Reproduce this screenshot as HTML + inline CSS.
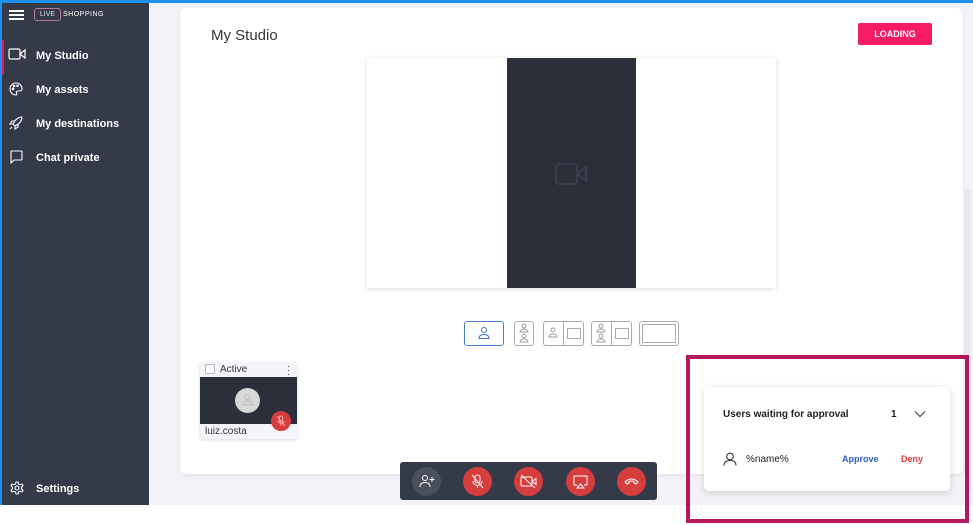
<!DOCTYPE html>
<html><head><meta charset="utf-8"><style>
*{box-sizing:border-box;margin:0;padding:0}
body{width:973px;height:525px;overflow:hidden;background:#fff;font-family:"Liberation Sans",sans-serif;position:relative}
.abs{position:absolute}
#top{left:0;top:0;width:973px;height:3px;background:#1e90f0}
#lb{left:0;top:0;width:2px;height:505px;background:#1e90f0}
#side{left:2px;top:3px;width:147px;height:502px;background:#343a48;color:#fff;font-size:11px;font-weight:bold}
#main{left:149px;top:3px;width:824px;height:502px;background:#f3f3f7}
#card{left:180px;top:8px;width:783px;height:466px;background:#fff;border-radius:6px;box-shadow:0 1px 4px rgba(0,0,0,.08)}
.nav{position:absolute;left:34px}
svg{position:absolute}
</style></head><body>
<div class="abs" id="main"></div>
<div class="abs" style="left:965px;top:190px;width:6px;height:300px;background:#e8e8ec"></div>
<div class="abs" id="card"></div>
<div class="abs" id="side">
 <div class="abs" style="left:7px;top:7px;width:15px;height:2px;background:#fff;box-shadow:0 4px 0 #fff,0 8px 0 #fff"></div>
 <div class="abs" style="left:32px;top:5px;width:27px;height:13px;border:1px solid #b07a96;border-radius:3px;font-size:7px;font-weight:normal;color:#ddd;text-align:center;line-height:11px">LIVE</div>
 <div class="abs" style="left:61px;top:8px;font-size:7px;font-weight:normal;letter-spacing:.5px">SHOPPING</div>
 <div class="abs" style="left:0;top:37px;width:2px;height:35px;background:#e8175d"></div>
 <svg style="left:6px;top:45px" width="18" height="12" viewBox="0 0 18 12" fill="none" stroke="#fff" stroke-width="1.2"><rect x="1" y="1" width="11" height="10" rx="1.5"/><path d="M12 6l5-4v8z"/></svg>
 <div class="nav" style="top:47px">My Studio</div>
 <svg style="left:7px;top:79px" width="14" height="14" viewBox="0 0 14 14" fill="none" stroke="#fff" stroke-width="1.1"><path d="M7 1a6 6 0 1 0 0 12c1 0 1-1 .5-2s0-2 1.5-2h2a2 2 0 0 0 2-2C13 3.5 10.5 1 7 1z"/><circle cx="4" cy="7" r=".8"/><circle cx="5" cy="4" r=".8"/><circle cx="8.5" cy="3.8" r=".8"/></svg>
 <div class="nav" style="top:81px">My assets</div>
 <svg style="left:7px;top:113px" width="14" height="14" viewBox="0 0 14 14" fill="none" stroke="#fff" stroke-width="1.1"><path d="M13 1C9 1 6 4 4 8l2 2c4-2 7-5 7-9zM4 8L1 8l2-3h3M6 10v3l3-2V8M3 11l-2 2"/></svg>
 <div class="nav" style="top:115px">My destinations</div>
 <svg style="left:7px;top:147px" width="14" height="14" viewBox="0 0 14 14" fill="none" stroke="#fff" stroke-width="1.1"><path d="M2 1h10a1 1 0 0 1 1 1v7a1 1 0 0 1-1 1H5l-3 3V2a1 1 0 0 1 1-1z"/></svg>
 <div class="nav" style="top:149px">Chat private</div>
 <svg style="left:8px;top:478px" width="14" height="14" viewBox="0 0 14 14" fill="none" stroke="#fff" stroke-width="1.1"><circle cx="7" cy="7" r="2"/><path d="M6 1h2l.5 2 1.5.8 2-.8 1 1.7-1.5 1.5v1.6l1.5 1.5-1 1.7-2-.8-1.5.8L8 13H6l-.5-2-1.5-.8-2 .8-1-1.7 1.5-1.5V6.2L1 4.7l1-1.7 2 .8 1.5-.8z"/></svg>
 <div class="nav" style="top:480px">Settings</div>
</div>
<div class="abs" style="left:211px;top:27px;font-size:15px;color:#333">My Studio</div>
<div class="abs" style="left:858px;top:23px;width:74px;height:22px;background:#f51c64;border-radius:2px;color:#fff;font-size:9px;font-weight:bold;text-align:center;line-height:22px">LOADING</div>
<div class="abs" style="left:367px;top:58px;width:409px;height:230px;background:#fff;box-shadow:0 1px 5px rgba(0,0,0,.15)"></div>
<div class="abs" style="left:507px;top:58px;width:129px;height:230px;background:#2b2f39"></div>
<svg style="left:555px;top:162px" width="34" height="24" viewBox="0 0 34 24" fill="none" stroke="#3e4250" stroke-width="1.6"><rect x="1" y="2" width="21" height="20" rx="3"/><path d="M22 12l9-7v14z"/></svg>
<div class="abs" style="left:464px;top:321px;width:40px;height:25px;border:1px solid #4a7bd0;border-radius:3px"></div>
<svg style="left:477px;top:326px" width="14" height="14" viewBox="0 0 14 14" fill="none" stroke="#3b6fc9" stroke-width="1"><circle cx="7" cy="4" r="2.5"/><path d="M2 12.5c0-3 2-4 5-4s5 1 5 4z"/></svg>
<div class="abs" style="left:514px;top:321px;width:20px;height:25px;border:1px solid #aaa;border-radius:3px"></div>
<div class="abs" style="left:543px;top:321px;width:41px;height:25px;border:1px solid #aaa;border-radius:3px"></div>
<div class="abs" style="left:563px;top:321px;width:1px;height:25px;background:#aaa"></div>
<div class="abs" style="left:567px;top:328px;width:14px;height:11px;border:1px solid #aaa"></div>
<div class="abs" style="left:591px;top:321px;width:41px;height:25px;border:1px solid #aaa;border-radius:3px"></div>
<div class="abs" style="left:611px;top:321px;width:1px;height:25px;background:#aaa"></div>
<div class="abs" style="left:615px;top:328px;width:14px;height:11px;border:1px solid #aaa"></div>
<div class="abs" style="left:639px;top:321px;width:40px;height:25px;border:1px solid #aaa;border-radius:3px"></div>
<div class="abs" style="left:642px;top:324px;width:34px;height:19px;border:1px solid #aaa"></div>
<svg style="left:519px;top:322px" width="10" height="24" viewBox="0 0 10 24" fill="none" stroke="#999" stroke-width=".9"><circle cx="5" cy="4" r="2"/><path d="M1 10h8c0-2-2-3-4-3s-4 1-4 3z"/><circle cx="5" cy="14" r="2"/><path d="M1 20h8c0-2-2-3-4-3s-4 1-4 3z"/></svg>
<svg style="left:548px;top:326px" width="10" height="14" viewBox="0 0 10 14" fill="none" stroke="#999" stroke-width=".9"><circle cx="5" cy="4" r="2"/><path d="M1 11h8c0-2-2-3-4-3s-4 1-4 3z"/></svg>
<svg style="left:596px;top:322px" width="10" height="24" viewBox="0 0 10 24" fill="none" stroke="#999" stroke-width=".9"><circle cx="5" cy="4" r="2"/><path d="M1 10h8c0-2-2-3-4-3s-4 1-4 3z"/><circle cx="5" cy="14" r="2"/><path d="M1 20h8c0-2-2-3-4-3s-4 1-4 3z"/></svg>
<div class="abs" style="left:200px;top:362px;width:97px;height:77px;background:#f3f5fa;border-radius:3px;box-shadow:0 1px 3px rgba(0,0,0,.15)"></div>
<div class="abs" style="left:205px;top:364px;width:10px;height:10px;background:#fff;border:1px solid #bbb;border-radius:2px"></div>
<div class="abs" style="left:220px;top:364px;font-size:10px;color:#333">Active</div>
<div class="abs" style="left:287px;top:365px;font-size:10px;color:#333;line-height:4px">·<br>·<br>·</div>
<div class="abs" style="left:200px;top:377px;width:97px;height:47px;background:#2b2f39"></div>
<div class="abs" style="left:235px;top:388px;width:25px;height:25px;border-radius:50%;background:#d8d8d8"></div>
<svg style="left:241px;top:393px" width="13" height="14" viewBox="0 0 13 14" fill="none" stroke="#b8b8b8" stroke-width=".8"><circle cx="6.5" cy="4" r="2.5"/><path d="M1.5 12c0-3 2-4 5-4s5 1 5 4z"/></svg>
<div class="abs" style="left:271px;top:411px;width:20px;height:20px;border-radius:50%;background:#d63d3d"></div>
<svg style="left:276px;top:415px" width="10" height="12" viewBox="0 0 10 12" fill="none" stroke="#fbb" stroke-width=".8"><rect x="3.5" y="1" width="3" height="6" rx="1.5"/><path d="M2 5.5a3 3 0 0 0 6 0M5 9v2M1 1l8 10"/></svg>
<div class="abs" style="left:205px;top:426px;font-size:10px;color:#333">luiz.costa</div>
<div class="abs" style="left:400px;top:462px;width:257px;height:38px;background:#343a48;border-radius:3px"></div>
<div class="abs" style="left:412px;top:467px;width:29px;height:29px;border-radius:50%;background:#4a4f5c"></div>
<svg style="left:419px;top:474px" width="16" height="14" viewBox="0 0 16 14" fill="none" stroke="#fff" stroke-width="1"><circle cx="6" cy="4" r="2.5"/><path d="M1 13c0-3 2-4.5 5-4.5s5 1.5 5 4.5M13 3v5M10.5 5.5h5"/></svg>
<div class="abs" style="left:463px;top:467px;width:29px;height:29px;border-radius:50%;background:#d63d3d"></div>
<div class="abs" style="left:514px;top:467px;width:29px;height:29px;border-radius:50%;background:#d63d3d"></div>
<div class="abs" style="left:566px;top:467px;width:29px;height:29px;border-radius:50%;background:#d63d3d"></div>
<div class="abs" style="left:617px;top:467px;width:29px;height:29px;border-radius:50%;background:#d63d3d"></div>
<svg style="left:470px;top:474px" width="15" height="15" viewBox="0 0 15 15" fill="none" stroke="#fff" stroke-width="1"><rect x="5" y="1" width="5" height="8" rx="2.5"/><path d="M3 7a4.5 4.5 0 0 0 9 0M7.5 11.5V14M2 1l11 13"/></svg>
<svg style="left:520px;top:474px" width="17" height="15" viewBox="0 0 17 15" fill="none" stroke="#fff" stroke-width="1"><rect x="1" y="3" width="11" height="9" rx="1"/><path d="M12 7.5l4-3v6zM1 1l14 13"/></svg>
<svg style="left:572px;top:474px" width="17" height="15" viewBox="0 0 17 15" fill="none" stroke="#fff" stroke-width="1"><path d="M5 11H2V2h13v9h-3M5 14l3.5-4 3.5 4z"/></svg>
<svg style="left:623px;top:475px" width="17" height="12" viewBox="0 0 17 12" fill="none" stroke="#fff" stroke-width="1.1"><path d="M2 7c4-4 9-4 13 0l-2 2-2-1V6.5c-2-.8-3-.8-5 0V8l-2 1z"/></svg>
<div class="abs" style="left:704px;top:387px;width:246px;height:104px;background:#fff;border-radius:5px;box-shadow:0 2px 8px rgba(0,0,0,.15)"></div>
<div class="abs" style="left:723px;top:409px;font-size:10px;font-weight:bold;color:#222">Users waiting for approval</div>
<div class="abs" style="left:891px;top:409px;font-size:10px;font-weight:bold;color:#222">1</div>
<svg style="left:914px;top:410px" width="12" height="8" viewBox="0 0 12 8" fill="none" stroke="#444" stroke-width="1.2"><path d="M1 1.5l5 5 5-5"/></svg>
<svg style="left:723px;top:452px" width="14" height="14" viewBox="0 0 14 14" fill="none" stroke="#333" stroke-width="1.1"><circle cx="7" cy="4.5" r="3.3"/><path d="M1 13.5c0-3.5 2.5-5 6-5s6 1.5 6 5"/></svg>
<div class="abs" style="left:746px;top:454px;font-size:10px;color:#222">%name%</div>
<div class="abs" style="left:842px;top:454px;font-size:9px;font-weight:bold;color:#2d5fc5">Approve</div>
<div class="abs" style="left:901px;top:454px;font-size:9px;font-weight:bold;color:#e33b3b">Deny</div>
<div class="abs" style="left:686px;top:355px;width:283px;height:168px;border:4px solid #b5175f"></div>
<div class="abs" id="top"></div>
<div class="abs" id="lb"></div>
</body></html>
